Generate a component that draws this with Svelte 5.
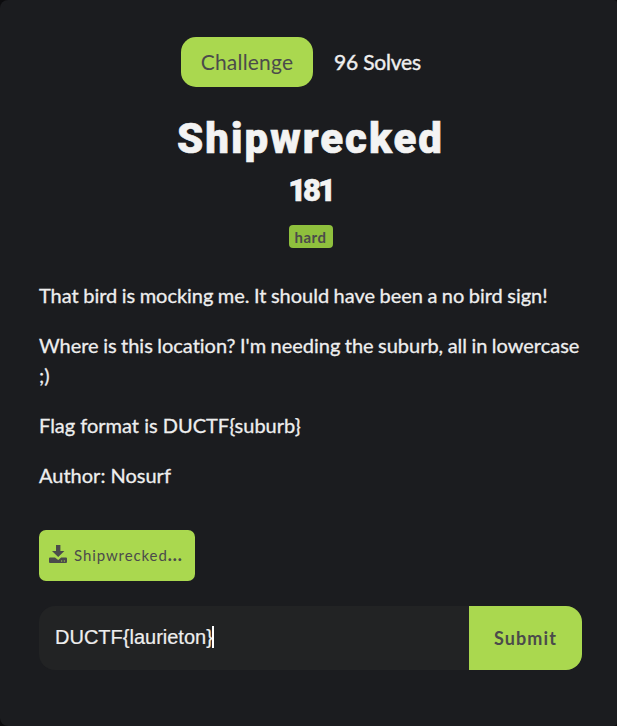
<script>
  let answer = $state('DUCTF{laurieton}');
  const description = [
    { text: 'That bird is mocking me. It should have been a no bird sign!', tight: true },
    { text: "Where is this location? I'm needing the suburb, all in lowercase ;)", tight: true },
    { text: 'Flag format is DUCTF{suburb}', tight: false },
    { text: 'Author: Nosurf', tight: false }
  ];
</script>

<main class="modal">
  <nav class="tabs">
    <button class="tab active"><span class="tab-text">Challenge</span></button>
    <button class="tab solves"><span class="solves-text">96 Solves</span></button>
  </nav>

  <header>
    <h1>Shipwrecked</h1>
    <h2>181</h2>
    <span class="tag">hard</span>
  </header>

  <section class="description">
    {#each description as paragraph}
      <p class:tight={paragraph.tight}>{paragraph.text}</p>
    {/each}
  </section>

  <button class="download">
    <svg viewBox="0 0 18 18" width="18" height="18" aria-hidden="true">
      <path fill="#4b4b4b" fill-rule="evenodd" d="M7 0h4.400v6h4L9.200 12 3 6h4zM1 12.500h5L9.200 15l3-2.500H17q1 0 1 1V17q0 1-1 1H1q-1 0-1-1v-3.500q0-1 1-1zM12 15.600v1h1.200v-1zM14.800 15.600v1H16v-1z" />
    </svg>
    <span class="file">Shipwrecked<b>...</b></span>
  </button>

  <form class="answer">
    <div class="field"><span>{answer}</span><i class="caret"></i></div>
    <button class="submit" type="button">Submit</button>
  </form>
</main>

<style>
  :global(body) { background: #0c0c0e; }
  * { box-sizing: border-box; }
  .modal {
    height: 726px;
    padding: 37px 35px 0 39px;
    background: #1b1c1f;
    border-radius: 8px 3px 4px 8px;
    color: #eee;
    font-family: Lato, sans-serif;
    font-variant-ligatures: none;
    overflow: hidden;
  }
  button {
    border: 0;
    padding: 0;
    background: #aad84f;
    color: #4b4b4b;
    font-family: Lato, sans-serif;
    white-space: nowrap;
  }
  .tabs { display: flex; margin-left: 142px; height: 50px; }
  .tab { padding-bottom: 2px; font-size: 21px; }
  .active { width: 132px; border-radius: 15px; }
  .solves { margin-left: 21px; background: none; color: #eee; }
  .tab-text { letter-spacing: 0.2px; }
  .solves-text { letter-spacing: -0.2px; -webkit-text-stroke: 0.4px; }
  header { display: flex; flex-direction: column; align-items: center; }
  h1, h2 {
    margin: 0;
    color: #f3f3f3;
    font-family: Roboto, sans-serif;
    font-weight: 900;
    white-space: nowrap;
    -webkit-text-stroke: 0.6px;
  }
  h1 { margin-top: 25px; font-size: 42px; line-height: 54px; letter-spacing: 2px; }
  h2 { margin-top: 7px; font-size: 31px; line-height: 36px; letter-spacing: -3.2px; }
  .tag {
    width: 44px;
    height: 23px;
    margin-top: 16px;
    border-radius: 4px;
    background: #8fc03d;
    color: #4b4b4b;
    font-size: 15px;
    font-weight: 700;
    letter-spacing: 0.5px;
    line-height: 25px;
    text-align: center;
  }
  .description { margin-top: 32px; height: 250px; }
  p { margin: 0 0 20px; font-size: 20px; line-height: 30px; -webkit-text-stroke: 0.3px; }
  .tight { letter-spacing: -0.02px; word-spacing: -0.6px; }
  .download {
    display: flex;
    align-items: center;
    width: 156px;
    height: 51px;
    padding: 0 0 3px 10px;
    border-radius: 7px;
  }
  .file { margin: 1px 0 0 7px; font-size: 15px; letter-spacing: 0.9px; }
  .file b { font-size: 17px; font-weight: 900; }
  .answer { display: flex; width: 543px; height: 64px; margin: 25px 0 0; }
  .field {
    display: flex;
    align-items: center;
    width: 430px;
    padding: 0 0 2px 16px;
    border-radius: 16px 0 0 16px;
    background: #222324;
    font-family: "Liberation Sans", Arial, sans-serif;
    font-size: 20px;
    -webkit-text-stroke: 0.2px;
  }
  .caret { width: 2px; height: 22px; margin-left: -1px; background: #fff; }
  .submit {
    width: 113px;
    border-radius: 0 16px 16px 0;
    font-size: 18px;
    font-weight: 700;
    letter-spacing: 1.1px;
  }
</style>
